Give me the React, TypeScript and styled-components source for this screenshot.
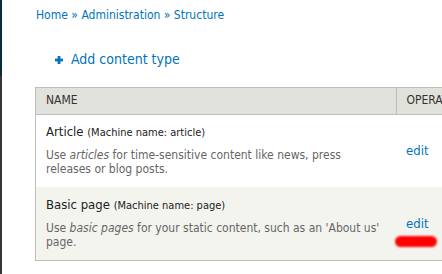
import React from "react";
import styled, { createGlobalStyle } from "styled-components";

const GlobalStyle = createGlobalStyle`
  html, body {
    margin: 0;
    padding: 0;
    background: #ffffff;
    overflow: hidden;
  }
  body {
    font-family: "DejaVu Sans Condensed", "Liberation Sans", Arial, sans-serif;
    color: #333333;
  }
`;

const Page = styled.div`
  display: flex;
  flex-direction: row;
  min-height: 274px;
  width: 100%;
`;

const Edge = styled.div`
  display: flex;
  flex-direction: column;
  width: 2px;
  flex: 0 0 2px;
`;

const EdgeTop = styled.div`
  height: 76px;
  background: #0a2a3e;
`;

const EdgeBottom = styled.div`
  flex: 1;
  background: #363636;
`;

const Content = styled.main`
  display: flex;
  flex-direction: column;
  padding-left: 33px;
  flex: 1;
  min-width: 0;
`;

const Breadcrumb = styled.nav`
  padding: 7px 0 0 1px;
  font-size: 12px;
  line-height: 16px;
  color: #0074bd;
`;

const Crumb = styled.a`
  color: #0074bd;
  text-decoration: none;
`;

const Sep = styled.span`
  color: #0074bd;
`;

const ActionList = styled.ul`
  list-style: none;
  margin: 26px 0 0 20px;
  padding: 0;
`;

const ActionLink = styled.a`
  display: inline-flex;
  align-items: center;
  gap: 8px;
  font-size: 14px;
  line-height: 18px;
  color: #0074bd;
  text-decoration: none;
`;

const PlusIcon = styled.svg`
  width: 8px;
  height: 8px;
  margin-top: 3px;
  flex: 0 0 8px;
`;

const Table = styled.table`
  margin-top: 19px;
  width: 480px;
  border-collapse: collapse;
  border: 1px solid #bebfb9;
  font-size: 12px;
`;

const HeadCell = styled.th<{ $divider?: boolean }>`
  background: #e1e2dc;
  border-bottom: 1px solid #bebfb9;
  border-left: ${(p) => (p.$divider ? "1px solid #bebfb9" : "none")};
  padding: 4px 10px 6px;
  line-height: 16px;
  font-weight: normal;
  text-align: left;
  text-transform: uppercase;
  color: #333333;
  white-space: nowrap;
`;

const Row = styled.tr<{ $alt?: boolean }>`
  background: ${(p) => (p.$alt ? "#f3f4ee" : "#ffffff")};
`;

const NameCell = styled.td<{ $alt?: boolean }>`
  width: 340px;
  padding: ${(p) => (p.$alt ? "10px 10px 11px" : "9px 10px 11px")};
  vertical-align: top;
`;

const OpsCell = styled.td`
  position: relative;
  padding: 0 10px;
  vertical-align: middle;
`;

const Title = styled.div`
  font-size: 13px;
  line-height: 15px;
  color: #222222;
`;

const Machine = styled.small`
  font-size: 11px;
  color: #222222;
`;

const Description = styled.div`
  margin-top: 8px;
  font-size: 12px;
  line-height: 14px;
  color: #666666;
`;

const EditLink = styled.a`
  font-size: 13px;
  line-height: 16px;
  color: #0074bd;
  text-decoration: none;
`;

const Scribble = styled.span`
  position: absolute;
  left: -1px;
  top: 49px;
  width: 42px;
  height: 11px;
  border-radius: 6px;
  background: #ff0000;
  filter: blur(1px);
`;

type ContentType = {
  name: string;
  machine: string;
  before: string;
  em: string;
  after: string;
  marked?: boolean;
};

const types: ContentType[] = [
  {
    name: "Article",
    machine: "article",
    before: "Use ",
    em: "articles",
    after: " for time-sensitive content like news, press releases or blog posts.",
  },
  {
    name: "Basic page",
    machine: "page",
    before: "Use ",
    em: "basic pages",
    after: " for your static content, such as an 'About us' page.",
    marked: true,
  },
];

export default function App() {
  return (
    <>
      <GlobalStyle />
      <Page>
        <Edge>
          <EdgeTop />
          <EdgeBottom />
        </Edge>
        <Content>
          <Breadcrumb>
            <Crumb href="#">Home</Crumb> <Sep>»</Sep>{" "}
            <Crumb href="#">Administration</Crumb> <Sep>»</Sep>{" "}
            <Crumb href="#">Structure</Crumb>
          </Breadcrumb>
          <ActionList>
            <li>
              <ActionLink href="#">
                <PlusIcon viewBox="0 0 8 8" aria-hidden="true">
                  <rect x="2.6" y="0" width="2.8" height="8" fill="#0074bd" />
                  <rect x="0" y="2.6" width="8" height="2.8" fill="#0074bd" />
                </PlusIcon>
                Add content type
              </ActionLink>
            </li>
          </ActionList>
          <Table>
            <thead>
              <tr>
                <HeadCell>Name</HeadCell>
                <HeadCell $divider>Operations</HeadCell>
              </tr>
            </thead>
            <tbody>
              {types.map((t, i) => (
                <Row key={t.machine} $alt={i % 2 === 1}>
                  <NameCell $alt={i % 2 === 1}>
                    <Title>
                      {t.name} <Machine>(Machine name: {t.machine})</Machine>
                    </Title>
                    <Description>
                      {t.before}
                      <em>{t.em}</em>
                      {t.after}
                    </Description>
                  </NameCell>
                  <OpsCell>
                    <EditLink href="#">edit</EditLink>
                    {t.marked && <Scribble />}
                  </OpsCell>
                </Row>
              ))}
            </tbody>
          </Table>
        </Content>
      </Page>
    </>
  );
}
